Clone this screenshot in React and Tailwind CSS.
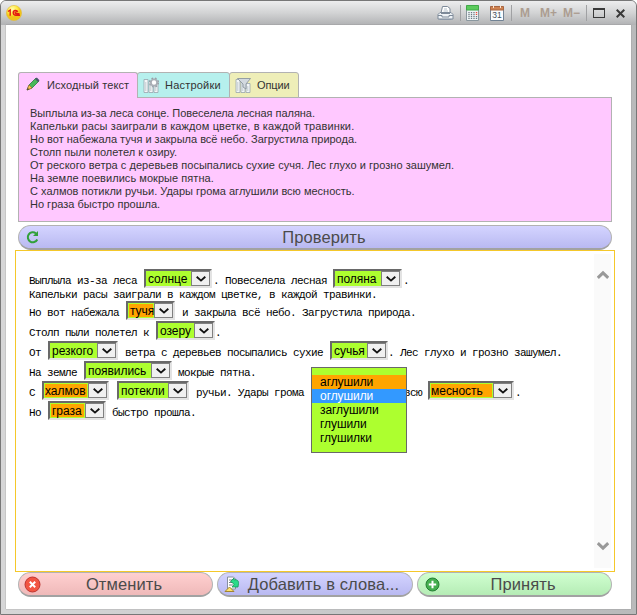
const sourceLines = [
  ["Выплыла из-за леса сонце. Повеселела лесная паляна.", "tracking-[-0.05px]"],
  ["Капельки расы заиграли в каждом цветке, в каждой травинки.", "tracking-[0.12px]"],
  ["Но вот набежала тучя и закрыла всё небо. Загрустила природа.", "tracking-[-0.01px]"],
  ["Столп пыли полетел к озиру.", "tracking-[0.03px]"],
  ["От реского ветра с деревьев посыпались сухие сучя. Лес глухо и грозно зашумел.", "tracking-[0.04px]"],
  ["На земле поевились мокрые пятна.", "tracking-[0.05px]"],
  ["С халмов потикли ручьи. Удары грома аглушили всю месность.", "tracking-[0px]"],
  ["Но граза быстро прошла.", "tracking-[0px]"],
];

function Choice({ word, width, wrong, inset = "pl-px" }) {
  return (
    <span className={`mr-[2px] flex h-[19px] shrink-0 border-2 border-t-[#696969] border-l-[#696969] border-r-[#e3e3e3] border-b-[#e3e3e3] bg-white ${width}`}>
      <span className="min-w-0 flex-1 bg-[#adff2f] p-px">
        <span className={`block h-[13px] whitespace-nowrap font-['Liberation_Sans',Arial,sans-serif] text-[12px] leading-[14px] tracking-[-0.05px] text-black ${inset} ${wrong ? "bg-[#ffa500]" : ""}`}>{word}</span>
      </span>
      <span className="flex w-[19px] shrink-0 items-center justify-center border border-[#808080] bg-[#f0f0f0]">
        <svg width="10" height="6" viewBox="0 0 10 6" fill="none" stroke="#111" strokeWidth="1.9"><path d="M.7.8 5 4.6 9.3.8" /></svg>
      </span>
    </span>
  );
}

const T = ({ children }) => <span className="shrink-0 whitespace-pre pt-[3px]">{children}</span>;
const Row = ({ children }) => <div className="flex h-5 items-start">{children}</div>;

function PillButton({ icon, children, className, textClass = "" }) {
  return (
    <button className={`flex items-center rounded-full border border-[#b2b2b2] border-b-2 border-b-[#a2a2a2] pl-[6px] ${className}`}>
      <span className="flex w-5 shrink-0">{icon}</span>
      <span className={`flex-1 whitespace-nowrap text-center font-['Liberation_Sans',Arial,sans-serif] text-[16.5px] leading-5 tracking-[0.1px] text-[#4b4b4b] ${textClass}`}>{children}</span>
    </button>
  );
}

function Cabinet({ children }) {
  return (
    <svg width="17" height="17" viewBox="0 0 17 17" fill="none">
      <path d="M1 2.5h4v13H1zM6 4.5h4v11H6zM11 6.5h4v9h-4z" fill="#f4f7f8" stroke="#98a5ad" strokeWidth=".8" />
      <path d="M2.8 5v9M7.8 7v7M12.8 9v5" stroke="#c2ccd0" />
      {children}
    </svg>
  );
}

function TitleBar() {
  return (
    <div className="flex h-[24px] shrink-0 items-center bg-linear-to-b from-[#ededee] via-[#d2d3d4] to-[#b1b2b4] pl-[5px]">
      <svg width="16" height="16" viewBox="0 0 16 16">
        <defs><radialGradient id="gold" cx=".4" cy=".25"><stop stopColor="#fffbb0" /><stop offset=".65" stopColor="#ffe93e" /><stop offset="1" stopColor="#f0c319" /></radialGradient></defs>
        <circle cx="8" cy="8" r="7.6" fill="url(#gold)" stroke="#e3bb38" strokeWidth=".6" />
        <path d="M2 6.5 4.2 5v5.7M11.8 6.7C11 5 7.2 4.8 7.2 7.9c0 2.4 2 2.5 6.8 2.3M11.5 7.2C10.6 6.4 9 6.7 9 8c0 .7.6.8 4.5.8" fill="none" stroke="#e31b12" strokeWidth="1.4" />
      </svg>
      <div className="ml-auto flex h-full items-center">
        <svg className="mr-[6px]" width="17" height="16" viewBox="0 0 17 16" fill="none" stroke="#66717f">
          <path d="M4 8 5.5 1.5h5l2.5 2V8" fill="#fff" stroke="#7d8a99" />
          <path d="M7 4h3M6.5 6H11" stroke="#b4c0cb" />
          <path d="M1 9.5 3 7.5h11l2 2v4.5H1z" fill="#eef2f6" stroke="#7d8a99" />
          <path d="M4 8.5h9M1 10.5h4v1.5h7v-1.5h4" stroke="#7d8a99" />
          <path d="M2.5 14.5h12" stroke="#8c98a8" />
        </svg>
        <div className="h-[16px] w-px bg-[#a0a1a3]" />
        <svg className="ml-[5px]" width="13" height="16" viewBox="0 0 13 16">
          <path d="M.5 1h12v14.5H.5z" fill="#eef3f5" stroke="#8a979f" />
          <path d="M.5.5h12V5H.5z" fill="#5ccb5c" stroke="#41a848" />
          <path d="M3 7v7M5.5 7v7M8 7v7" stroke="#6c7982" strokeWidth="1.3" strokeDasharray="1.2 .8" />
          <path d="M10.5 7v3" stroke="#f04a38" strokeWidth="1.4" strokeDasharray="1.2 .8" />
          <path d="M10.5 11v3" stroke="#6c7982" strokeWidth="1.3" strokeDasharray="1.2 .8" />
        </svg>
        <svg className="ml-[11px]" width="14" height="16" viewBox="0 0 14 16">
          <path d="M.5 2h13v13.5H.5z" fill="#fafcff" stroke="#718294" />
          <path d="M.5 1.5h13v3.5H.5z" fill="#cf8250" stroke="#a86642" />
          <path d="M3.5 0v3M10.5 0v3" stroke="#f9e5d5" />
          <text x="7" y="13" textAnchor="middle" className="fill-[#454e5a] font-['Liberation_Sans',Arial,sans-serif] text-[8.5px]">31</text>
        </svg>
        <div className="ml-[7px] h-[16px] w-px bg-[#a0a1a3]" />
        <div className="flex w-[74px] pl-[8px] font-['Liberation_Sans',Arial,sans-serif] text-[12px] leading-4 font-bold text-[#ac9d91]">
          <span className="w-[20px]">M</span><span className="w-[23px]">M+</span><span>M−</span>
        </div>
        <div className="h-[16px] w-px bg-[#a0a1a3]" />
        <div className="ml-[6px] h-[10px] w-[12px] border border-t-2 border-[#393939]" />
        <svg className="mr-[11px] ml-[11px]" width="9" height="9" viewBox="0 0 9 9" stroke="#393939" strokeWidth="2"><path d="m.7.7 7.6 7.6m0-7.6L.7 8.3" /></svg>
      </div>
    </div>
  );
}

function Tabs() {
  return (
    <div className="flex h-[26px] items-start font-['Liberation_Sans',Arial,sans-serif] text-[11px] leading-[25px] text-[#333]">
      <div className="relative z-10 flex h-[26px] w-[120px] items-center rounded-t-[3px] border border-b-0 border-[#b2b2b2] bg-[#ffc8ff]">
        <svg className="ml-[7px] mr-[7px] -mt-[3px]" width="14" height="14" viewBox="0 0 14 14">
          <path d="m1 13 2-5L10 1l3 3-7 7z" fill="#48b85b" stroke="#277b40" strokeWidth=".8" />
          <path d="m3 8 3 3-5 2z" fill="#ffc34b" stroke="#9c6b32" strokeWidth=".7" />
          <path d="m9 2 1.8-1.5 2.7 2.7L12 5z" fill="#48586a" /><path d="m1 13 .8-2 1.3 1.2z" fill="#333" />
        </svg>
        <span className="whitespace-nowrap tracking-[0.1px]">Исходный текст</span>
      </div>
      <div className="-ml-px flex h-[26px] w-[93px] items-center rounded-t-[3px] border border-[#b2b2b2] bg-[#b6f0ed] pl-[5px]">
        <Cabinet><circle cx="11" cy="5.5" r="3.1" fill="#fff" stroke="#a9aeb5" strokeWidth="1.8" /><circle cx="11" cy="5.5" r="4.5" stroke="#989ea7" strokeWidth="1.2" strokeDasharray="1.8 1.8" /></Cabinet>
        <span className="ml-[5px] tracking-[0.2px]">Настройки</span>
      </div>
      <div className="-ml-px flex h-[26px] w-[70px] items-center rounded-t-[3px] border border-[#b2b2b2] bg-[#eeeeb8] pl-[5px]">
        <Cabinet><path d="M2.5 1.5h13L11 7v5l-3-2V7z" fill="#d2d9df" stroke="#8b959e" strokeWidth=".9" /></Cabinet>
        <span className="ml-[5px] tracking-[-0.1px]">Опции</span>
      </div>
    </div>
  );
}

export default function App() {
  return (
    <div className="flex h-[615px] w-[637px] flex-col overflow-hidden rounded-t-[6px] border border-[#777] bg-linear-to-r from-[#d6d6d7] via-[#c9cacb] to-[#b9babb]">
      <TitleBar />
      <main className="mr-[5px] ml-[5px] flex h-[584px] flex-col bg-white pt-[47px] shadow-[0_0_1px_#777]">
        <div className="ml-[12px] w-[594px]">
          <Tabs />
          <div className="-mt-px h-[125px] border border-[#b2b2b2] bg-[#ffc8ff] px-[11px] pt-[9px] font-['Liberation_Sans',Arial,sans-serif] text-[11px] leading-[13px] text-[#333]">
            {sourceLines.map(([line, tracking]) => <div key={line} className={`whitespace-nowrap ${tracking}`}>{line}</div>)}
          </div>
          <PillButton className="mt-[3px] h-[25px] w-full bg-linear-to-b from-[#d4d4ff] to-[#b9b9f1]" textClass="pr-[8px]"
            icon={<svg width="15" height="15" viewBox="0 0 15 15" fill="none" stroke="#31a03b" strokeWidth="2"><path d="M12.3 9.5A5 5 0 1 1 11 3.4" /><path d="M13 1v5H8z" fill="#31a03b" stroke="none" /></svg>}>Проверить</PillButton>
        </div>
        <section className="relative ml-[9px] flex h-[322px] w-[600px] border border-[#f5c82a] bg-white">
          <div className="w-[578px] shrink-0 pt-[18px] pl-[13px] font-['Liberation_Mono','Courier_New',monospace] text-[11px] leading-[18px] tracking-[-0.601px] text-black">
            <Row><T>Выплыла из-за леса </T><span className="w-px" /><Choice word="солнце" width="w-[68px]" /><span className="-ml-px" /><T>. Повеселела лесная </T><Choice word="поляна" width="w-[69px]" /><span className="-ml-px" /><T>.</T></Row>
            <div className="h-[12px] whitespace-pre leading-[13px]">Капельки расы заиграли в каждом цветке, в каждой травинки.</div>
            <Row><T>Но вот набежала </T><span className="w-px" /><Choice wrong word="тучя" width="w-[49px]" inset="pl-[1px]" /><span className="-ml-px" /><T> и закрыла всё небо. Загрустила природа.</T></Row>
            <Row><T>Столп пыли полетел к </T><span className="w-px" /><Choice word="озеру" width="w-[59px]" /><span className="-ml-[2px]" /><T>.</T></Row>
            <Row><T>От </T><span className="w-px" /><Choice word="резкого" width="w-[70px]" /><span className="-ml-px" /><T> ветра с деревьев посыпались сухие </T><span className="w-px" /><Choice word="сучья" width="w-[58px]" /><span className="-ml-[2px]" /><T>. Лес глухо и грозно зашумел.</T></Row>
            <Row><T>На земле </T><span className="w-px" /><Choice word="появились" width="w-[88px]" /><span className="-ml-[2px]" /><T> мокрые пятна.</T></Row>
            <Row>
              <T>С </T><span className="w-px" /><Choice wrong word="халмов" width="w-[67px]" inset="pl-0" /><T> </T><Choice word="потекли" width="w-[72px]" /><span className="-ml-px" /><T> ручьи. Удары грома </T><span className="w-px" />
              <div className="relative w-[87px] shrink-0">
                <div className="absolute -top-[14px] left-0 h-[86px] w-[96px] border border-[#696969] bg-[#adff2f] pt-[7px] font-['Liberation_Sans',Arial,sans-serif] text-[12px] leading-[14px] tracking-[-0.08px]">
                  <div className="bg-[#ffa500] pl-[8px]">аглушили</div>
                  <div className="bg-[#3399ff] pl-[8px] text-white">оглушили</div>
                  <div className="pl-[8px]">заглушили</div>
                  <div className="pl-[8px]">глушили</div>
                  <div className="pl-[8px]">глушилки</div>
                </div>
              </div>
              <T> всю </T><Choice wrong word="месность" width="w-[86px]" inset="pl-0" /><span className="-ml-px" /><T>.</T>
            </Row>
            <Row><T>Но </T><span className="w-px" /><Choice wrong word="граза" width="w-[58px]" inset="pl-[1px]" /><span className="-ml-[2px]" /><T> быстро прошла.</T></Row>
          </div>
          <div className="mt-[3px] flex h-[314px] w-[17px] flex-col items-center justify-between bg-[#fafafa] pt-[16px] pb-[17px]">
            <svg width="12" height="9" viewBox="0 0 12 9" fill="none" stroke="#999" strokeWidth="3"><path d="m.8 7.8 5.2-5 5.2 5" /></svg>
            <svg width="12" height="9" viewBox="0 0 12 9" fill="none" stroke="#999" strokeWidth="3"><path d="m.8 1.2 5.2 5 5.2-5" /></svg>
          </div>
        </section>
        <footer className="ml-[12px] flex h-[25px] gap-[4px]">
          <PillButton className="w-[195px] bg-linear-to-b from-[#ffd0d0] to-[#efb9b9]" textClass="pr-[9px]"
            icon={<svg className="-ml-px" width="17" height="17" viewBox="0 0 17 17"><circle cx="8.5" cy="8.5" r="7.5" fill="#f25542" stroke="#bd3430" /><path d="m5.8 5.8 5.4 5.4m0-5.4-5.4 5.4" stroke="#fff" strokeWidth="2" /></svg>}>Отменить</PillButton>
          <PillButton className="w-[196px] bg-linear-to-b from-[#d4d4ff] to-[#b9b9f1]" textClass="pr-[9px]"
            icon={<svg width="17" height="17" viewBox="0 0 17 17"><path d="M3.5 1h6l2 2v10h-8z" fill="#fff" stroke="#8790a0" /><path d="M5 4h4M5 6.5h4M5 9h4" stroke="#77818c" /><path d="M6.5 5.5 10 2v2c3-1 5 1 4.5 3.5L14 11H8l2-2V8z" fill="#2adb8a" stroke="#169758" strokeWidth=".8" /><path d="m1 15.5 4.5-4.5 4.5 4.5z" fill="#ffe46a" stroke="#a18532" /></svg>}>Добавить в слова...</PillButton>
          <PillButton className="w-[195px] bg-linear-to-b from-[#d0ffd0] to-[#b5ecb5]" textClass="pr-[9px]"
            icon={<svg width="17" height="17" viewBox="0 0 17 17"><circle cx="8.5" cy="8.5" r="6.5" fill="#44ae4e" stroke="#217d31" /><path d="M8.5 4.8v7.4M4.8 8.5h7.4" stroke="#fff" strokeWidth="2" /></svg>}>Принять</PillButton>
        </footer>
      </main>
    </div>
  );
}
